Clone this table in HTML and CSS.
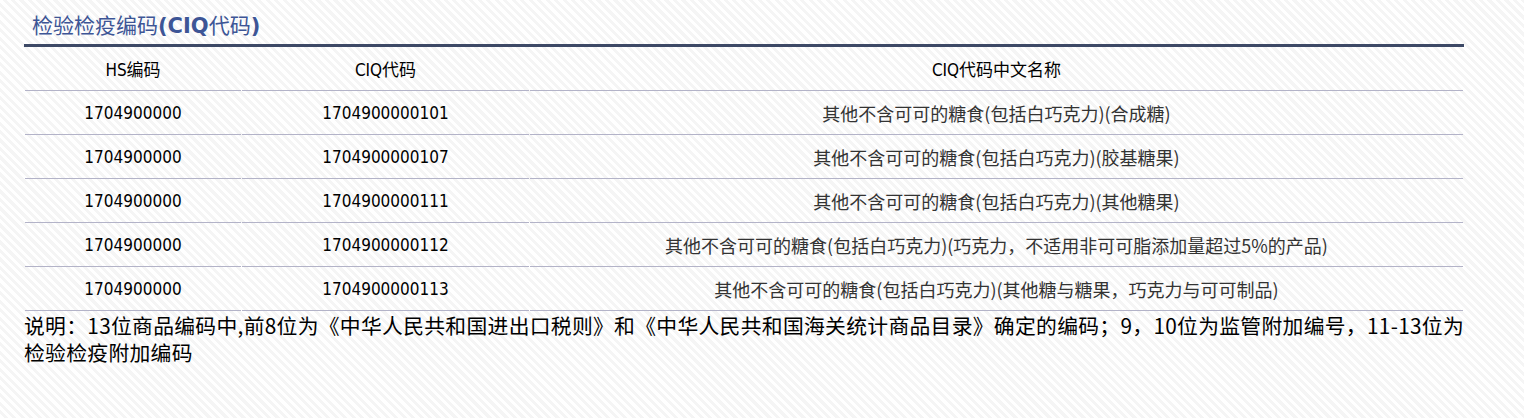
FILE: index.html
```html
<!DOCTYPE html>
<html lang="zh-CN">
<head>
<meta charset="utf-8">
<title>检验检疫编码(CIQ代码)</title>
<link rel="stylesheet" href="styles.css">
</head>
<body>
<div class="wrap">
  <h2 class="title">检验检疫编码<b>(CIQ</b>代码<b>)</b></h2>
  <table class="ciq">
    <colgroup>
      <col class="c1"><col class="c2"><col class="c3">
    </colgroup>
    <thead>
      <tr><th>HS编码</th><th>CIQ代码</th><th>CIQ代码中文名称</th></tr>
    </thead>
    <tbody>
      <tr><td>1704900000</td><td>1704900000101</td><td class="name">其他不含可可的糖食(包括白巧克力)(合成糖)</td></tr>
      <tr><td>1704900000</td><td>1704900000107</td><td class="name">其他不含可可的糖食(包括白巧克力)(胶基糖果)</td></tr>
      <tr><td>1704900000</td><td>1704900000111</td><td class="name">其他不含可可的糖食(包括白巧克力)(其他糖果)</td></tr>
      <tr><td>1704900000</td><td>1704900000112</td><td class="name">其他不含可可的糖食(包括白巧克力)(巧克力，不适用非可可脂添加量超过5%的产品)</td></tr>
      <tr><td>1704900000</td><td>1704900000113</td><td class="name">其他不含可可的糖食(包括白巧克力)(其他糖与糖果，巧克力与可可制品)</td></tr>
    </tbody>
  </table>
  <p class="note">说明：13位商品编码中,前8位为《中华人民共和国进出口税则》和《中华人民共和国海关统计商品目录》确定的编码；9，10位为监管附加编号，11-13位为检验检疫附加编码</p>
</div>
</body>
</html>
```
FILE: styles.css
```css
html, body {
  margin: 0;
  padding: 0;
}
body {
  min-height: 418px;
  background: repeating-linear-gradient(45deg, #ffffff 0 3px, #f5f5f5 3px 6px);
  font-family: "DejaVu Sans Condensed", "Noto Sans CJK SC", sans-serif;
  color: #000;
}
.wrap {
  width: 1440px;
  margin-left: 24px;
  padding-top: 8px;
}
.title {
  margin: 0;
  height: 36px;
  line-height: 36px;
  padding-left: 8px;
  font-size: 21px;
  font-weight: normal;
  color: #3d5596;
  font-family: "DejaVu Sans", "Noto Sans CJK SC", sans-serif;
}
.title b {
  font-weight: bold;
}
.ciq {
  width: 1440px;
  table-layout: fixed;
  border-collapse: separate;
  border-spacing: 1px 0;
  border-top: 3px solid #3d4966;
  font-size: 17px;
}
.c1 { width: 216px; }
.c2 { width: 287px; }
.c3 { width: 933px; }
.ciq th, .ciq td {
  padding: 0;
  height: 43px;
  text-align: center;
  vertical-align: middle;
  font-weight: normal;
  border-bottom: 1px solid #b3b3c8;
}
.ciq .name {
  font-size: 18px;
  color: #333;
  font-family: "Noto Sans CJK SC", sans-serif;
}
.note {
  margin: 1px 0 0;
  width: 1444px;
  font-size: 20.8px;
  line-height: 27px;
  letter-spacing: 0.3px;
  font-family: "Noto Sans CJK SC", sans-serif;
  color: #000;
}
```
